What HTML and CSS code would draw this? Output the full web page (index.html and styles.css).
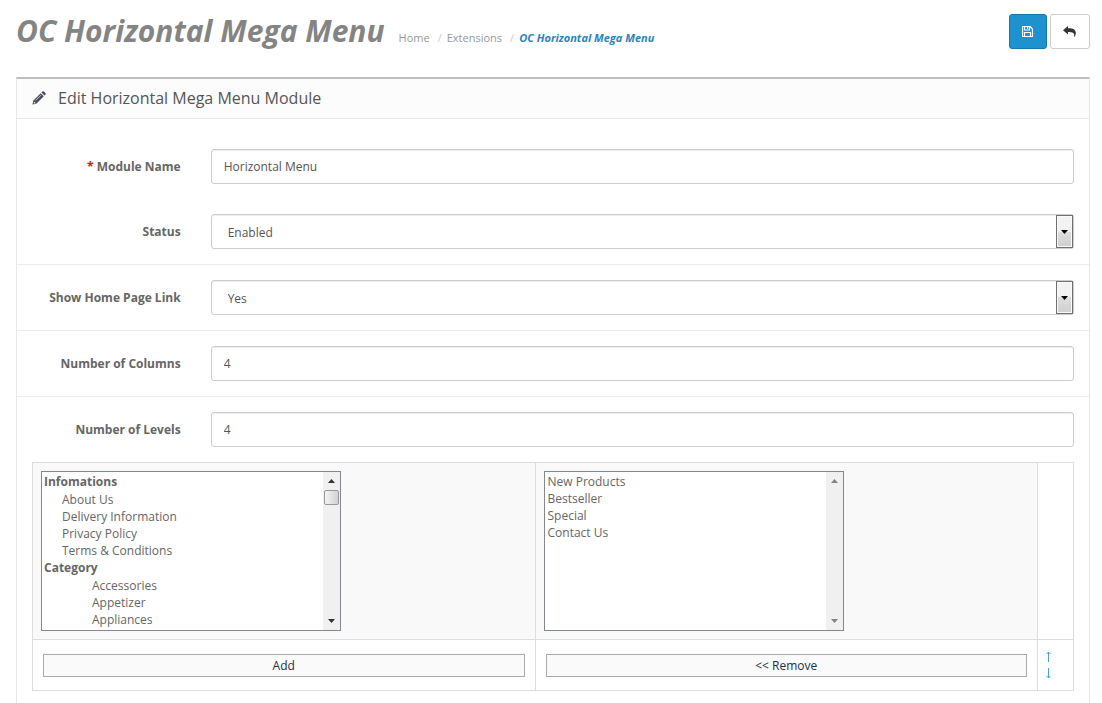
FILE: index.html
```html
<!DOCTYPE html>
<html lang="en">
<head>
<meta charset="utf-8">
<title>OC Horizontal Mega Menu</title>
<link rel="stylesheet" href="styles.css">
</head>
<body>
<header class="page-header">
  <h1 class="page-title">OC Horizontal Mega Menu</h1>
  <nav aria-label="Breadcrumb">
    <ol class="breadcrumb">
      <li><a href="#">Home</a></li>
      <li><a href="#">Extensions</a></li>
      <li><a href="#" class="current">OC Horizontal Mega Menu</a></li>
    </ol>
  </nav>
  <div class="actions">
    <button type="submit" form="module-form" class="btn btn-primary" aria-label="Save">
      <svg width="12" height="11" viewBox="0 0 12 11" fill="none" stroke="currentColor" stroke-width="1.200"><path d="M.5.5H8l2.500 2.500v7.500H.5zM2.500.5v3.500h5V.5M2.500 10.500V6.500h6v4M5.500 1v2"/></svg>
    </button>
    <a href="#" class="btn btn-default" aria-label="Cancel">
      <svg width="14" height="11" viewBox="0 0 14 11" fill="currentColor"><path d="M0 4.200 5 0v2.300c5 0 7.800 1.300 7.800 4.800 0 1.400-.5 2.700-1.300 3.700-.2.200-.5.100-.4-.2.700-3.300-1-4.500-6.100-4.500v2.400z"/></svg>
    </a>
  </div>
</header>
<main class="panel">
  <div class="panel-heading">
    <svg width="14" height="14" viewBox="0 0 14 14" fill="currentColor"><path fill-rule="evenodd" d="M8.700 2.200 11.800 5.300 4.300 12.800.5 13.500 1.200 9.700zM2 10.900l-.3 1.200.5.500 1.200-.3v-.7H2.700v-.7zM8.700 4.100 3.400 9.400l.3.300L9 4.400zM9.400 1.500l.9-.9q.8-.7 1.600 0l1.500 1.500q.7.800 0 1.600l-.9.900z"/></svg>
    <h2 class="panel-title">Edit Horizontal Mega Menu Module</h2>
  </div>
  <form id="module-form" class="panel-body">
    <div class="form-group">
      <label for="name"><span class="required">*</span> Module Name</label>
      <input id="name" class="control" type="text" value="Horizontal Menu">
    </div>
    <div class="form-group">
      <label for="status">Status</label>
      <div class="select-box">
        <select id="status" class="control"><option>Enabled</option><option>Disabled</option></select>
        <span class="select-arrow"><svg width="7" height="4" viewBox="0 0 7 4"><path d="M0 0h7L3.500 4z"/></svg></span>
      </div>
    </div>
    <div class="form-group divided">
      <label for="home">Show Home Page Link</label>
      <div class="select-box">
        <select id="home" class="control"><option>Yes</option><option>No</option></select>
        <span class="select-arrow"><svg width="7" height="4" viewBox="0 0 7 4"><path d="M0 0h7L3.500 4z"/></svg></span>
      </div>
    </div>
    <div class="form-group divided">
      <label for="columns">Number of Columns</label>
      <input id="columns" class="control" type="text" value="4">
    </div>
    <div class="form-group divided">
      <label for="levels">Number of Levels</label>
      <input id="levels" class="control" type="text" value="4">
    </div>
    <table class="items">
      <tr class="lists">
        <td>
          <div class="listbox">
            <select multiple size="9" aria-label="Available items">
              <optgroup label="Infomations">
                <option>About Us</option>
                <option>Delivery Information</option>
                <option>Privacy Policy</option>
                <option>Terms &amp; Conditions</option>
              </optgroup>
              <optgroup label="Category" class="nested">
                <option>Accessories</option>
                <option>Appetizer</option>
                <option>Appliances</option>
              </optgroup>
            </select>
            <div class="scrollbar">
              <svg width="7" height="4" viewBox="0 0 7 4"><path d="M0 4h7L3.500 0z"/></svg>
              <span class="thumb"></span>
              <svg class="down" width="7" height="4" viewBox="0 0 7 4"><path d="M0 0h7L3.500 4z"/></svg>
            </div>
          </div>
        </td>
        <td>
          <div class="listbox flat">
            <select multiple size="9" aria-label="Menu items">
              <option>New Products</option>
              <option>Bestseller</option>
              <option>Special</option>
              <option>Contact Us</option>
            </select>
            <div class="scrollbar disabled">
              <svg width="7" height="4" viewBox="0 0 7 4"><path d="M0 4h7L3.500 0z"/></svg>
              <svg class="down" width="7" height="4" viewBox="0 0 7 4"><path d="M0 0h7L3.500 4z"/></svg>
            </div>
          </div>
        </td>
        <td class="order"></td>
      </tr>
      <tr>
        <td><button type="button" class="move">Add</button></td>
        <td><button type="button" class="move">&lt;&lt; Remove</button></td>
        <td class="order">
          <a href="#" aria-label="Move up"><svg width="5" height="11" viewBox="0 0 5 11" fill="none" stroke="currentColor"><path d="M2.500 11V1M.5 3l2-2 2 2"/></svg></a>
          <a href="#" aria-label="Move down"><svg width="5" height="11" viewBox="0 0 5 11" fill="none" stroke="currentColor"><path d="M2.500 0v10M.5 8l2 2 2-2"/></svg></a>
        </td>
      </tr>
    </table>
  </form>
</main>
</body>
</html>
```
FILE: styles.css
```css
* { box-sizing: border-box; }
body {
  margin: 0;
  padding: 14px 12px 0 16px;
  background: #fff;
  color: #666;
  font: 12px/17px "Open Sans", sans-serif;
}
input, select, button { font: inherit; color: inherit; }
svg { display: block; }
.page-header { display: flex; align-items: baseline; margin-bottom: 28px; }
.page-title {
  margin: 0 14px 0 0;
  color: #848484;
  font-size: 30px;
  font-style: italic;
  font-weight: 700;
  line-height: 33px;
}
.breadcrumb { display: flex; margin: 0; padding: 0; list-style: none; font-size: 11px; }
.breadcrumb a { color: #999; text-decoration: none; }
.breadcrumb li + li::before { content: "/"; padding: 0 5px 0 8px; color: #ccc; }
.breadcrumb .current { color: #2a84bd; font-weight: 700; font-style: italic; }
.actions { display: flex; gap: 3px; align-self: flex-start; margin-left: auto; }
.btn {
  display: flex;
  align-items: center;
  justify-content: center;
  height: 35px;
  padding: 0 12px;
  border: 1px solid #ccc;
  border-radius: 3px;
}
.btn-primary { background: #1e91cf; border-color: #1978ab; color: #fff; }
.btn-default { background: #fff; color: #333; }
.panel { border: 1px solid #e8e8e8; border-top: 2px solid #bfbfbf; }
.panel-heading {
  display: flex;
  align-items: center;
  gap: 12px;
  height: 40px;
  padding: 0 15px 2px;
  border-bottom: 1px solid #e8e8e8;
  background: #fcfcfc;
  color: #4c4d5a;
}
.panel-title { margin: 0; font-size: 16px; font-weight: 400; line-height: 20px; color: #555; }
.panel-body { padding: 15px 0; }
.form-group {
  display: grid;
  grid-template-columns: 1fr 5fr;
  align-items: center;
  padding: 15px 0;
}
.form-group > * { margin: 0 15px; min-width: 0; }
.form-group label { text-align: right; font-weight: 700; white-space: nowrap; }
.divided { border-top: 1px solid #ededed; }
.required { color: #f00; }
.control {
  height: 35px;
  padding: 0 12px;
  border: 1px solid #ccc;
  border-radius: 3px;
  background: #fff;
  box-shadow: inset 0 1px 1px rgba(0, 0, 0, .075);
  color: #555;
}
.select-box { position: relative; }
.select-box .control { display: block; width: 100%; padding: 2px 16px 0; appearance: none; }
.select-arrow {
  position: absolute;
  top: 1px;
  right: 1px;
  bottom: 1px;
  display: flex;
  align-items: center;
  justify-content: center;
  width: 17px;
  border: 1px solid #707070;
  background: linear-gradient(#f2f2f2 50%, #dedede 50%, #cfcfcf);
  box-shadow: inset 0 0 0 1px #fafafa;
  pointer-events: none;
}
.items {
  width: calc(100% - 30px);
  margin: 0 15px;
  border-collapse: collapse;
  table-layout: fixed;
}
.items td { padding: 8px; border: 1px solid #ddd; }
.items .order { width: 36px; background: #fff; }
.lists td { background: #f9f9f9; }
.listbox { display: flex; width: 300px; height: 160px; border: 1px solid #828790; background: #fff; }
.listbox select {
  flex: 1;
  min-width: 0;
  height: 158px;
  padding: 1px 0;
  border: 0;
  border-radius: 0;
  background: #fff;
  overflow: hidden;
  outline: 0;
}
.listbox option { min-height: 17px; padding: 0 0 0 20px; line-height: 17px; }
.listbox optgroup { font-weight: 700; line-height: 16px; }
.listbox optgroup option { font-weight: 400; }
.listbox .nested option { padding-left: 50px; }
.flat option { padding-left: 3px; }
.scrollbar {
  display: flex;
  flex-direction: column;
  align-items: center;
  gap: 7px;
  width: 17px;
  padding: 7px 0;
  background: #f0f0f0;
  fill: #333;
}
.scrollbar.disabled { fill: #838383; }
.thumb {
  width: 15px;
  height: 15px;
  border: 1px solid #979797;
  border-radius: 2px;
  background: linear-gradient(90deg, #f4f4f4, #d2d2d2);
}
.down { margin-top: auto; }
.move {
  display: block;
  width: calc(100% - 4px);
  height: 23px;
  margin: 0 2px;
  padding: 0;
  border: 1px solid #a9a9a9;
  background: #fafafa;
  color: #1e2d50;
}
.order a { display: flex; align-items: center; height: 17px; color: #4d9fd3; }
```
